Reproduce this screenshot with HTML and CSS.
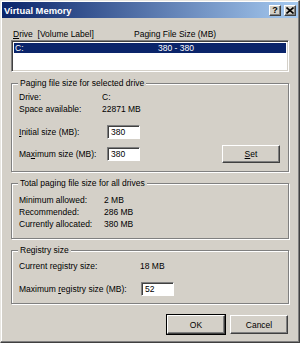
FILE: index.html
```html
<!DOCTYPE html>
<html lang="en">
<head>
  <meta charset="UTF-8">
  <title>Virtual Memory</title>
  <link rel="stylesheet" href="styles.css">
</head>
<body>
  <div class="window">
    <div class="titlebar">
      <span class="title">Virtual Memory</span>
      <div class="caption-buttons">
        <span class="cap-btn help">?</span>
        <span class="cap-btn close">
          <svg width="8" height="7" viewBox="0 0 8 7"><path d="M0.5 0.5 L7.5 6.5 M7.5 0.5 L0.5 6.5" stroke="#000" stroke-width="1.6"/></svg>
        </span>
      </div>
    </div>

    <div class="content">
      <div class="list-head">
        <span class="col-drive"><u>D</u>rive&nbsp; [Volume Label]</span>
        <span class="col-size">Paging File Size (MB)</span>
      </div>
      <div class="listbox">
        <div class="list-row selected">
          <span class="col-drive">C:</span>
          <span class="col-size center">380 - 380</span>
        </div>
      </div>

      <fieldset class="group g-drive">
        <legend>Paging file size for selected drive</legend>
        <div class="info">
          <div class="info-row"><span class="lbl w1">Drive:</span><span>C:</span></div>
          <div class="info-row"><span class="lbl w1">Space available:</span><span>22871 MB</span></div>
        </div>
        <div class="field-row first">
          <span class="lbl w2"><u>I</u>nitial size (MB):</span>
          <span class="edit">380</span>
        </div>
        <div class="field-row">
          <span class="lbl w2">Ma<u>x</u>imum size (MB):</span>
          <span class="edit">380</span>
          <button class="btn set"><u>S</u>et</button>
        </div>
      </fieldset>

      <fieldset class="group g-total">
        <legend>Total paging file size for all drives</legend>
        <div class="info">
          <div class="info-row"><span class="lbl w3">Minimum allowed:</span><span>2 MB</span></div>
          <div class="info-row"><span class="lbl w3">Recommended:</span><span>286 MB</span></div>
          <div class="info-row"><span class="lbl w3">Currently allocated:</span><span>380 MB</span></div>
        </div>
      </fieldset>

      <fieldset class="group g-reg">
        <legend>Registry size</legend>
        <div class="info">
          <div class="info-row"><span class="lbl w4">Current registry size:</span><span>18 MB</span></div>
        </div>
        <div class="field-row reg">
          <span class="lbl w4b">Maximum <u>r</u>egistry size (MB):</span>
          <span class="edit">52</span>
        </div>
      </fieldset>

      <div class="buttons">
        <button class="btn default">OK</button>
        <button class="btn">Cancel</button>
      </div>
    </div>
  </div>
</body>
</html>
```

FILE: styles.css
```css
body { margin: 0; font-family: "Liberation Sans", Arial, sans-serif; font-size: 8.5px; color: #000; }
u { text-decoration: underline; text-underline-offset: 1px; }

.window { width: 300px; height: 343px; box-sizing: border-box; background: #d4d0c8; border: 1px solid; border-color: #e8e6e1 #404040 #404040 #e8e6e1; box-shadow: inset -1px -1px 0 #808080, inset 1px 1px 0 #fff; padding: 1px; }

.titlebar { height: 16px; display: flex; align-items: center; justify-content: space-between; background: linear-gradient(to right, #0a246a, #a6caf0); padding: 0 2px 0 2px; }
.title { color: #fff; font-weight: bold; font-size: 9.4px; }
.caption-buttons { display: flex; gap: 3px; }
.cap-btn { width: 12px; height: 11px; box-sizing: border-box; background: #d4d0c8; border: 1px solid; border-color: #fff #404040 #404040 #fff; box-shadow: inset -1px -1px 0 #808080; display: flex; align-items: center; justify-content: center; font-weight: bold; font-size: 9px; line-height: 1; }

.content { padding: 0 9px 0 9px; }

.list-head { display: flex; margin-top: 10px; height: 12px; line-height: 12px; padding-left: 2px; }
.col-drive { width: 121px; flex: none; }
.col-size { width: 80px; flex: none; white-space: nowrap; }
.center { text-align: center; }

.listbox { height: 32px; box-sizing: border-box; background: #fff; border: 1px solid; border-color: #808080 #fff #fff #808080; box-shadow: inset 1px 1px 0 #404040, inset -1px -1px 0 #d4d0c8; padding: 2px 2px; }
.list-row { display: flex; height: 10px; line-height: 10px; padding-left: 1px; }
.list-row.selected { background: #0a246a; color: #fff; }

.group { margin: 6px 0 0 0; padding: 0 7px; border: 1px solid #808080; box-shadow: 1px 1px 0 #fff, inset 1px 1px 0 #fff; }
.group legend { padding: 0 2px; margin-left: -1px; line-height: 11px; background: #d4d0c8; }

.info { margin-top: 2px; }
.info-row { display: flex; height: 12px; line-height: 12px; }
.lbl { display: inline-block; }
.w1 { width: 83px; }
.w2 { width: 88px; }
.w3 { width: 85px; }
.w4 { width: 121px; }
.w4b { width: 122px; }

.field-row { display: flex; align-items: center; height: 14px; margin-top: 8px; }
.field-row.first { margin-top: 10px; }
.edit { width: 33px; height: 14px; box-sizing: border-box; background: #fff; border: 1px solid; border-color: #808080 #fff #fff #808080; box-shadow: inset 1px 1px 0 #404040; padding-left: 3px; line-height: 12px; }

.btn { font: inherit; color: #000; background: #d4d0c8; box-sizing: border-box; width: 58px; border: 1px solid; border-color: #fff #404040 #404040 #fff; box-shadow: inset -1px -1px 0 #808080; padding: 0; }
.set { height: 18px; margin-left: auto; margin-right: 1px; }

.g-drive { padding-bottom: 10px; }
.g-total { margin-top: 6px; padding-bottom: 8px; }
.g-total .info { margin-top: 5px; }
.g-reg { margin-top: 6px; padding-bottom: 7px; }
.g-reg .info { margin-top: 4px; }
.field-row.reg { margin-top: 10px; }

.buttons { display: flex; justify-content: flex-end; gap: 5px; margin-top: 11px; padding-right: 1px; }
.buttons .btn { height: 19px; }
.btn.default { outline: 1px solid #000; outline-offset: 0; border-color: #fff #404040 #404040 #fff; }
```
